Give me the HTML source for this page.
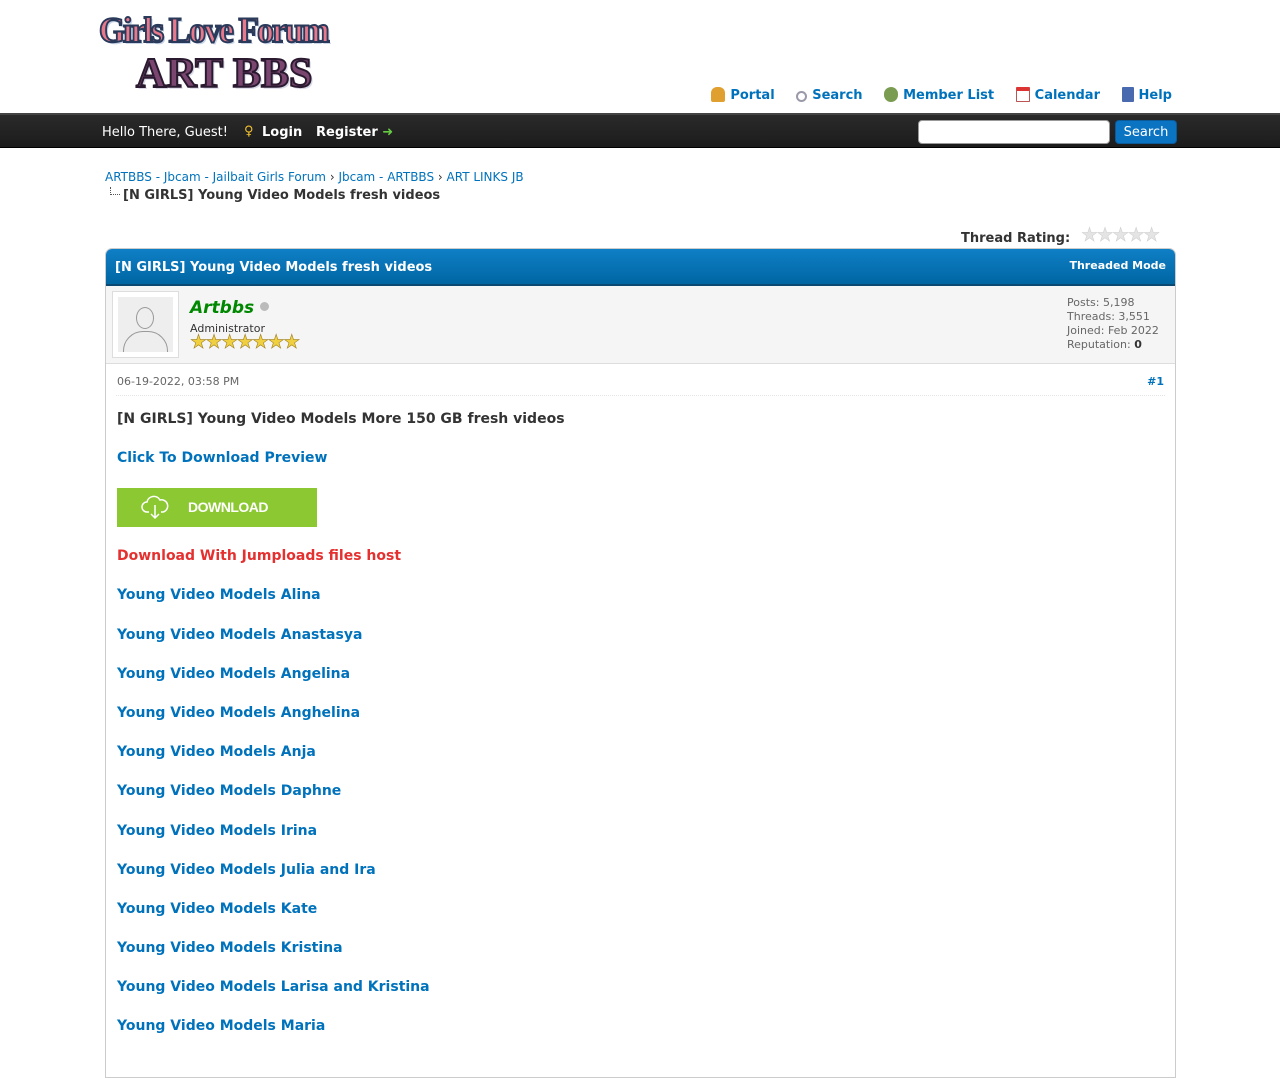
<!DOCTYPE html>
<html><head><meta charset="utf-8"><style>
*{box-sizing:border-box}
body{margin:0;background:#fff;font-family:"DejaVu Sans","Liberation Sans",sans-serif;font-size:13px;color:#333;overflow:hidden;width:1280px;height:1024px;position:relative}
a{color:#0072bc;text-decoration:none}
.abs{position:absolute}
.logo1{position:absolute;left:99px;top:9px;font-family:"Liberation Serif",serif;font-weight:bold;font-size:36px;color:#e8788a;-webkit-text-stroke:2px #2a3a5a;letter-spacing:-2px;text-shadow:2px 2px 0 #c8d4e8;transform:scaleX(.93);transform-origin:left}
.logo2{position:absolute;left:136px;top:50px;font-family:"Liberation Serif",serif;font-weight:bold;font-size:42px;color:#7a4670;-webkit-text-stroke:2px #2a1a30;text-shadow:2px 2px 0 #d8d8e8;transform:scaleX(1.0);transform-origin:left}
.menu{position:absolute;top:87px;right:108px;font-weight:bold;font-size:13px}
.menu span{margin-left:17px;color:#0072bc}
.menu i{display:inline-block;width:14px;height:15px;vertical-align:-3px;margin-right:5px;border-radius:3px}
.bar{position:absolute;left:0;top:113px;width:1280px;height:35px;background:linear-gradient(#2a2a2a,#1c1c1c);border-top:2px solid #444;border-bottom:1px solid #000;color:#fff}
.post a{font-weight:bold;font-size:14px;display:block;position:absolute;left:117px}
</style></head><body>
<div class="logo1">Girls Love Forum</div>
<div class="logo2">ART BBS</div>
<div class="menu">
<i style="background:#e0a030;border-radius:6px 6px 2px 2px"></i><span style="margin-left:0">Portal</span>
<span><i style="background:none;border:2px solid #99a;border-radius:50%;width:11px;height:11px"></i>Search</span>
<span><i style="background:#7a9c50;border-radius:7px"></i>Member List</span>
<span><i style="background:#fff;border:1px solid #b55;border-top:4px solid #d33;border-radius:1px"></i>Calendar</span>
<span><i style="background:#4a6ab0;border-radius:1px;width:12px"></i>Help</span>
</div>
<div class="bar">
<div class="abs" style="left:102px;top:10px">Hello There, Guest!</div>
<div class="abs" style="left:244px;top:9px;color:#f0c030;font-weight:bold">♀</div>
<div class="abs" style="left:262px;top:10px;font-weight:bold">Login</div>
<div class="abs" style="left:316px;top:10px;font-weight:bold">Register <span style="color:#6c4">➜</span></div>
<div class="abs" style="left:918px;top:5px;width:192px;height:24px;background:#fff;border:1px solid #999;border-radius:4px"></div>
<div class="abs" style="left:1115px;top:5px;width:62px;height:24px;background:#0a73c2;border:1px solid #0a5a9a;border-radius:4px;text-align:center;line-height:23px">Search</div>
</div>
<div class="abs" style="left:105px;top:170px;font-size:12px;color:#333"><a>ARTBBS - Jbcam - Jailbait Girls Forum</a> › <a>Jbcam - ARTBBS</a> › <a>ART LINKS JB</a></div>
<div class="abs" style="left:110px;top:187px;width:10px;height:8px;border-left:1px dotted #555;border-bottom:1px dotted #555"></div>
<div class="abs" style="left:123px;top:188px;font-weight:bold">[N GIRLS] Young Video Models fresh videos</div>
<div class="abs" style="left:961px;top:231px;font-weight:bold">Thread Rating:</div>
<div class="abs" style="left:1081px;top:224px;color:#e4e4e4;-webkit-text-stroke:.5px #ccc;font-size:19px;letter-spacing:-1.5px">★★★★★</div>
<div class="abs" style="left:105px;top:248px;width:1071px;height:830px;border:1px solid #ccc;border-radius:7px 7px 0 0;background:#fff">
<div style="height:37px;background:linear-gradient(#0f7fc6,#0066a2);border-radius:6px 6px 0 0;border-bottom:2px solid #0a4a72;color:#fff;font-weight:bold;position:relative">
<div class="abs" style="left:9px;top:11px">[N GIRLS] Young Video Models fresh videos</div>
<div class="abs" style="right:9px;top:10px;font-size:11px">Threaded Mode</div>
</div>
<div style="height:78px;background:#f5f5f5;border-bottom:1px solid #ddd;position:relative">
<div class="abs" style="left:6px;top:5px;width:67px;height:67px;border:1px solid #ddd;background:#fff;padding:5px"><div style="width:55px;height:55px;background:#eee;position:relative;overflow:hidden"><div class="abs" style="left:18px;top:10px;width:18px;height:22px;border:1px solid #999;border-radius:50%"></div><div class="abs" style="left:5px;top:34px;width:45px;height:30px;border:1px solid #999;border-radius:20px 20px 0 0"></div></div></div>
<div class="abs" style="left:84px;top:12px;font-size:17px;font-weight:bold;font-style:italic;color:#080">Artbbs <span style="display:inline-block;width:9px;height:9px;border-radius:50%;background:#bbb;vertical-align:2px"></span></div>
<div class="abs" style="left:84px;top:36px;font-size:11px">Administrator</div>
<div class="abs" style="left:84px;top:45px;font-size:19px;color:#f0d040;-webkit-text-stroke:.6px #a08020;letter-spacing:-1.5px">★★★★★★★</div>
<div class="abs" style="left:961px;top:10px;font-size:11px;color:#666;line-height:14px">Posts: 5,198<br>Threads: 3,551<br>Joined: Feb 2022<br>Reputation: <b style="color:#333">0</b></div>
</div>
<div style="height:32px;position:relative;border-bottom:1px dotted #e4e4e4;margin:0 10px">
<div class="abs" style="left:1px;top:11px;font-size:11px;color:#666">06-19-2022, 03:58 PM</div>
<div class="abs" style="right:1px;top:11px;font-size:11px;font-weight:bold;color:#0072bc">#1</div>
</div>
</div>
<div class="post">
<div class="abs" style="left:117px;top:411px;font-weight:bold;font-size:14px">[N GIRLS] Young Video Models More 150 GB fresh videos</div>
<a style="top:450px">Click To Download Preview</a>
<div class="abs" style="left:117px;top:488px;width:200px;height:39px;background:#8cc832;color:#fff;font-family:'Liberation Sans',sans-serif;font-weight:bold;font-size:14px;line-height:39px;padding-left:71px;letter-spacing:-.5px">DOWNLOAD</div>
<svg class="abs" style="left:140px;top:493px" width="30" height="28" viewBox="0 0 30 28"><path d="M9 19H7a5 5 0 010-10 7 7 0 0113-2 5 5 0 013 12h-2M15 12v13M11 21l4 4 4-4" fill="none" stroke="#fff" stroke-width="1.5"/></svg>
<a style="top:548px;color:#e53030">Download With Jumploads files host</a>
<a style="top:587px">Young Video Models Alina</a>
<a style="top:627px">Young Video Models Anastasya</a>
<a style="top:666px">Young Video Models Angelina</a>
<a style="top:705px">Young Video Models Anghelina</a>
<a style="top:744px">Young Video Models Anja</a>
<a style="top:783px">Young Video Models Daphne</a>
<a style="top:823px">Young Video Models Irina</a>
<a style="top:862px">Young Video Models Julia and Ira</a>
<a style="top:901px">Young Video Models Kate</a>
<a style="top:940px">Young Video Models Kristina</a>
<a style="top:979px">Young Video Models Larisa and Kristina</a>
<a style="top:1018px">Young Video Models Maria</a>
</div>
</body></html>
